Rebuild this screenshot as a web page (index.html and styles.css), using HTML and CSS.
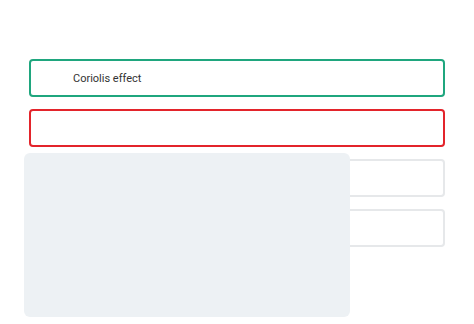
FILE: index.html
```html
<!DOCTYPE html>
<html>
<head>
<meta charset="utf-8">
<link rel="stylesheet" href="styles.css">
</head>
<body>
<div class="page">
  <div class="list">
    <div class="field field-ok"><span class="label">Coriolis effect</span></div>
    <div class="field field-error"></div>
    <div class="field"></div>
    <div class="field"></div>
  </div>
  <div class="panel"></div>
</div>
</body>
</html>
```
FILE: styles.css
```css
html, body {
  margin: 0;
  padding: 0;
  background: #ffffff;
}
.page {
  position: relative;
  width: 474px;
  height: 324px;
  font-family: Roboto, "Liberation Sans", sans-serif;
}
.list {
  display: flex;
  flex-direction: column;
  gap: 12px;
  padding: 59px 29px 0 29px;
}
.field {
  box-sizing: border-box;
  height: 38px;
  border: 2px solid #e6e8ea;
  border-radius: 4px;
  display: flex;
  align-items: center;
  padding-left: 42px;
}
.field-ok {
  border-color: #1fa67e;
}
.field-error {
  border-color: #e3242b;
}
.label {
  font-size: 11px;
  color: #333333;
}
.panel {
  position: absolute;
  left: 24px;
  top: 153px;
  width: 326px;
  height: 164px;
  border-radius: 6px;
  background: #edf1f4;
}
```
